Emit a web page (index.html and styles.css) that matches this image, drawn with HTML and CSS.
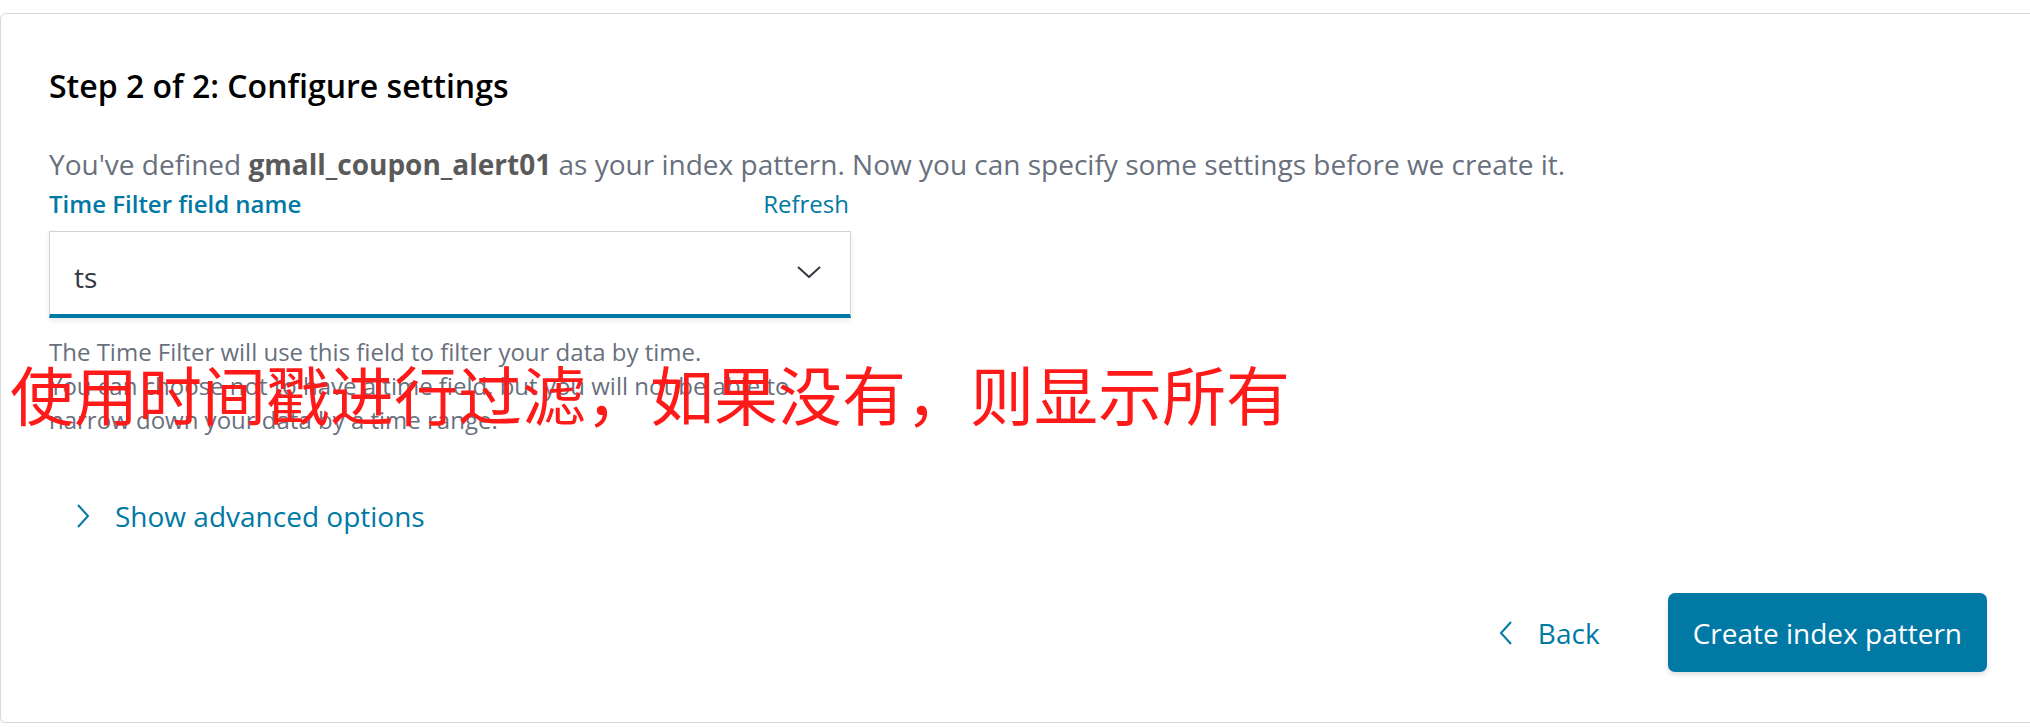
FILE: index.html
```html
<!DOCTYPE html>
<html lang="en">
<head>
<meta charset="utf-8">
<title>Configure settings</title>
<link rel="stylesheet" href="styles.css">
</head>
<body>
<div class="page">
  <section class="card">
    <h2 class="title">Step 2 of 2: Configure settings</h2>
    <p class="desc">You've defined <strong>gmall_coupon_alert01</strong> as your index pattern. Now you can specify some settings before we create it.</p>
    <div class="field">
      <div class="label-row">
        <span class="label">Time Filter field name</span>
        <span class="refresh">Refresh</span>
      </div>
      <div class="select">
        <span class="select-value">ts</span>
        <svg class="select-arrow" width="24" height="12" viewBox="0 0 24 12"><path d="M1 1 L12 11 L23 1" fill="none" stroke="#343741" stroke-width="2"/></svg>
      </div>
      <div class="help">
        <p>The Time Filter will use this field to filter your data by time.</p>
        <p>You can choose not to have a time field, but you will not be able to<br>narrow down your data by a time range.</p>
      </div>
    </div>
    <div class="advanced">
      <svg class="adv-arrow" width="14" height="24" viewBox="0 0 14 24"><path d="M2 1 L12 12 L2 23" fill="none" stroke="#0079a5" stroke-width="2"/></svg>
      <span>Show advanced options</span>
    </div>
    <div class="footer">
      <button class="back" type="button">
        <svg width="14" height="24" viewBox="0 0 14 24"><path d="M12 1 L2 12 L12 23" fill="none" stroke="#0079a5" stroke-width="2"/></svg>
        <span>Back</span>
      </button>
      <button class="primary" type="button">Create index pattern</button>
    </div>
    <div class="note">使用时间戳进行过滤，如果没有，则显示所有</div>
  </section>
</div>
</body>
</html>
```

FILE: styles.css
```css
html, body {
  margin: 0;
  padding: 0;
  background: #ffffff;
  overflow: hidden;
}

body {
  font-family: "Open Sans", "Noto Sans", "Noto Sans CJK SC", sans-serif;
  color: #343741;
}

.page {
  padding-top: 13px;
  margin-right: -12px;
}

.card {
  position: relative;
  height: 710px;
  box-sizing: border-box;
  border: 1px solid #d9d9d9;
  border-radius: 6px;
  box-shadow: 0 2px 2px rgba(0, 0, 0, 0.08);
  padding: 52px 60px 0 48px;
  display: flex;
  flex-direction: column;
}

.title {
  margin: 0;
  font-size: 32px;
  line-height: 40px;
  font-weight: 600;
  color: #000000;
}

.desc {
  margin: 40px 0 0 0;
  font-size: 28px;
  line-height: 36px;
  color: #69707d;
  white-space: nowrap;
}

.desc strong {
  font-weight: 700;
  color: #5a5a5a;
}

.field {
  width: 802px;
  margin-top: 7px;
}

.label-row {
  display: flex;
  justify-content: space-between;
  align-items: baseline;
  font-size: 24px;
  line-height: 30px;
  color: #0079a5;
}

.label {
  font-weight: 600;
}

.refresh {
  font-weight: 400;
  margin-right: 2px;
}

.select {
  margin-top: 12px;
  height: 87px;
  box-sizing: border-box;
  border: 1px solid #d3d3d3;
  border-bottom: 4px solid #0079a5;
  box-shadow: 0 3px 6px rgba(0, 0, 0, 0.08);
  display: flex;
  align-items: center;
  justify-content: space-between;
  padding: 8px 29px 0 24px;
}

.select-value {
  font-size: 28px;
  color: #343741;
}

.select-arrow {
  margin-top: -10px;
}

.help {
  margin-top: 17px;
  font-size: 24px;
  line-height: 34px;
  color: #69707d;
}

.help p {
  margin: 0;
  white-space: nowrap;
}

.advanced {
  margin-top: 59px;
  margin-left: 27px;
  display: flex;
  align-items: center;
  gap: 25px;
  font-size: 28px;
  line-height: 40px;
  color: #0079a5;
}

.footer {
  margin-top: 57px;
  display: flex;
  justify-content: flex-end;
  align-items: center;
  gap: 68px;
  margin-right: -6px;
}

.back {
  display: flex;
  align-items: center;
  gap: 25px;
  background: none;
  border: 0;
  padding: 0;
  font-family: inherit;
  font-size: 28px;
  color: #0079a5;
}

.primary {
  height: 79px;
  padding: 0 25px;
  background: #0079a5;
  color: #ffffff;
  border: 0;
  border-radius: 7px;
  box-shadow: 0 3px 5px rgba(0, 0, 0, 0.12);
  font-family: inherit;
  font-size: 28px;
}

.note {
  position: absolute;
  left: 9px;
  top: 338px;
  font-family: "Noto Sans CJK SC", sans-serif;
  font-size: 64px;
  line-height: 80px;
  color: #ff1a1a;
  white-space: nowrap;
}
```
